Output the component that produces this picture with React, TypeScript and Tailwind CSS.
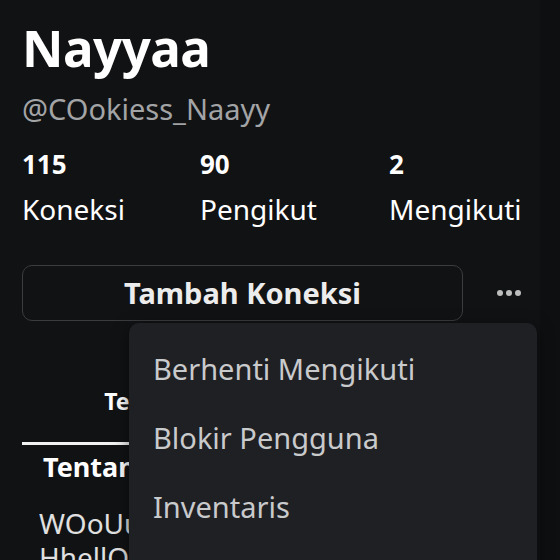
import React from "react";

const stats = [
  { value: "115", label: "Koneksi" },
  { value: "90", label: "Pengikut" },
  { value: "2", label: "Mengikuti" },
];

const menuItems = ["Berhenti Mengikuti", "Blokir Pengguna", "Inventaris"];

export default function App() {
  return (
    <div
      className="relative h-[560px] w-[560px] overflow-hidden bg-[#111214] text-white"
      style={{ fontFamily: '"Noto Sans", "Open Sans", sans-serif' }}
    >
      <div className="px-[22px] pt-[17px]">
        <h1 className="text-[51px] font-bold leading-[60px] tracking-[-0.5px]">Nayyaa</h1>
        <p className="mt-[14px] text-[29px] leading-[36px] text-[#a3a4a6]">@COokiess_Naayy</p>

        <div className="mt-[20px] flex">
          {stats.map((s, i) => (
            <div key={s.label} className={i === 0 ? "w-[178px]" : i === 1 ? "w-[189px]" : ""}>
              <div className="text-[26px] font-bold leading-[34px]">{s.value}</div>
              <div className="mt-[9px] text-[28px] leading-[38px]">{s.label}</div>
            </div>
          ))}
        </div>

        <div className="mt-[37px] flex items-center">
          <button className="flex h-[56px] w-[441px] items-center justify-center rounded-[10px] border border-[#3b3c3f] text-[29px] font-bold text-[#ececec]">
            Tambah Koneksi
          </button>
          <div className="ml-[34px] flex gap-[3px]">
            <span className="h-[6px] w-[6px] rounded-full bg-[#bdbdbd]" />
            <span className="h-[6px] w-[6px] rounded-full bg-[#bdbdbd]" />
            <span className="h-[6px] w-[6px] rounded-full bg-[#bdbdbd]" />
          </div>
        </div>

        <div className="mt-[66px] flex">
          <div className="w-[258px]">
            <div className="text-center text-[23px] font-bold leading-[28px]">Tentang</div>
            <div className="mt-[27px] h-[3px] bg-[#f2f2f2]" />
          </div>
          <div className="flex-1 text-center text-[23px] font-bold leading-[28px] text-[#a3a4a6]">Kreasi</div>
        </div>

        <div className="px-[21px] pt-[4px]">
          <div className="text-[27px] font-bold leading-[36px]">Tentang</div>
          <div className="ml-[-4px] mt-[21px] text-[28px] leading-[34px] text-[#e0e0e0]">
            WOoUuUu
            <br />
            HhellOo
          </div>
        </div>
      </div>

      <div className="absolute right-0 top-0 h-full w-[20px] bg-[#0e0f10]" />

      <div className="absolute left-[129px] top-[323px] h-[260px] w-[408px] rounded-[10px] bg-[#1f2023] shadow-[0_4px_16px_rgba(0,0,0,0.5)]">
        <ul className="pt-[23px]">
          {menuItems.map((item) => (
            <li key={item} className="mb-[23px] px-[24px] text-[29px] leading-[46px] text-[#c9cacc]">
              {item}
            </li>
          ))}
        </ul>
      </div>
    </div>
  );
}
